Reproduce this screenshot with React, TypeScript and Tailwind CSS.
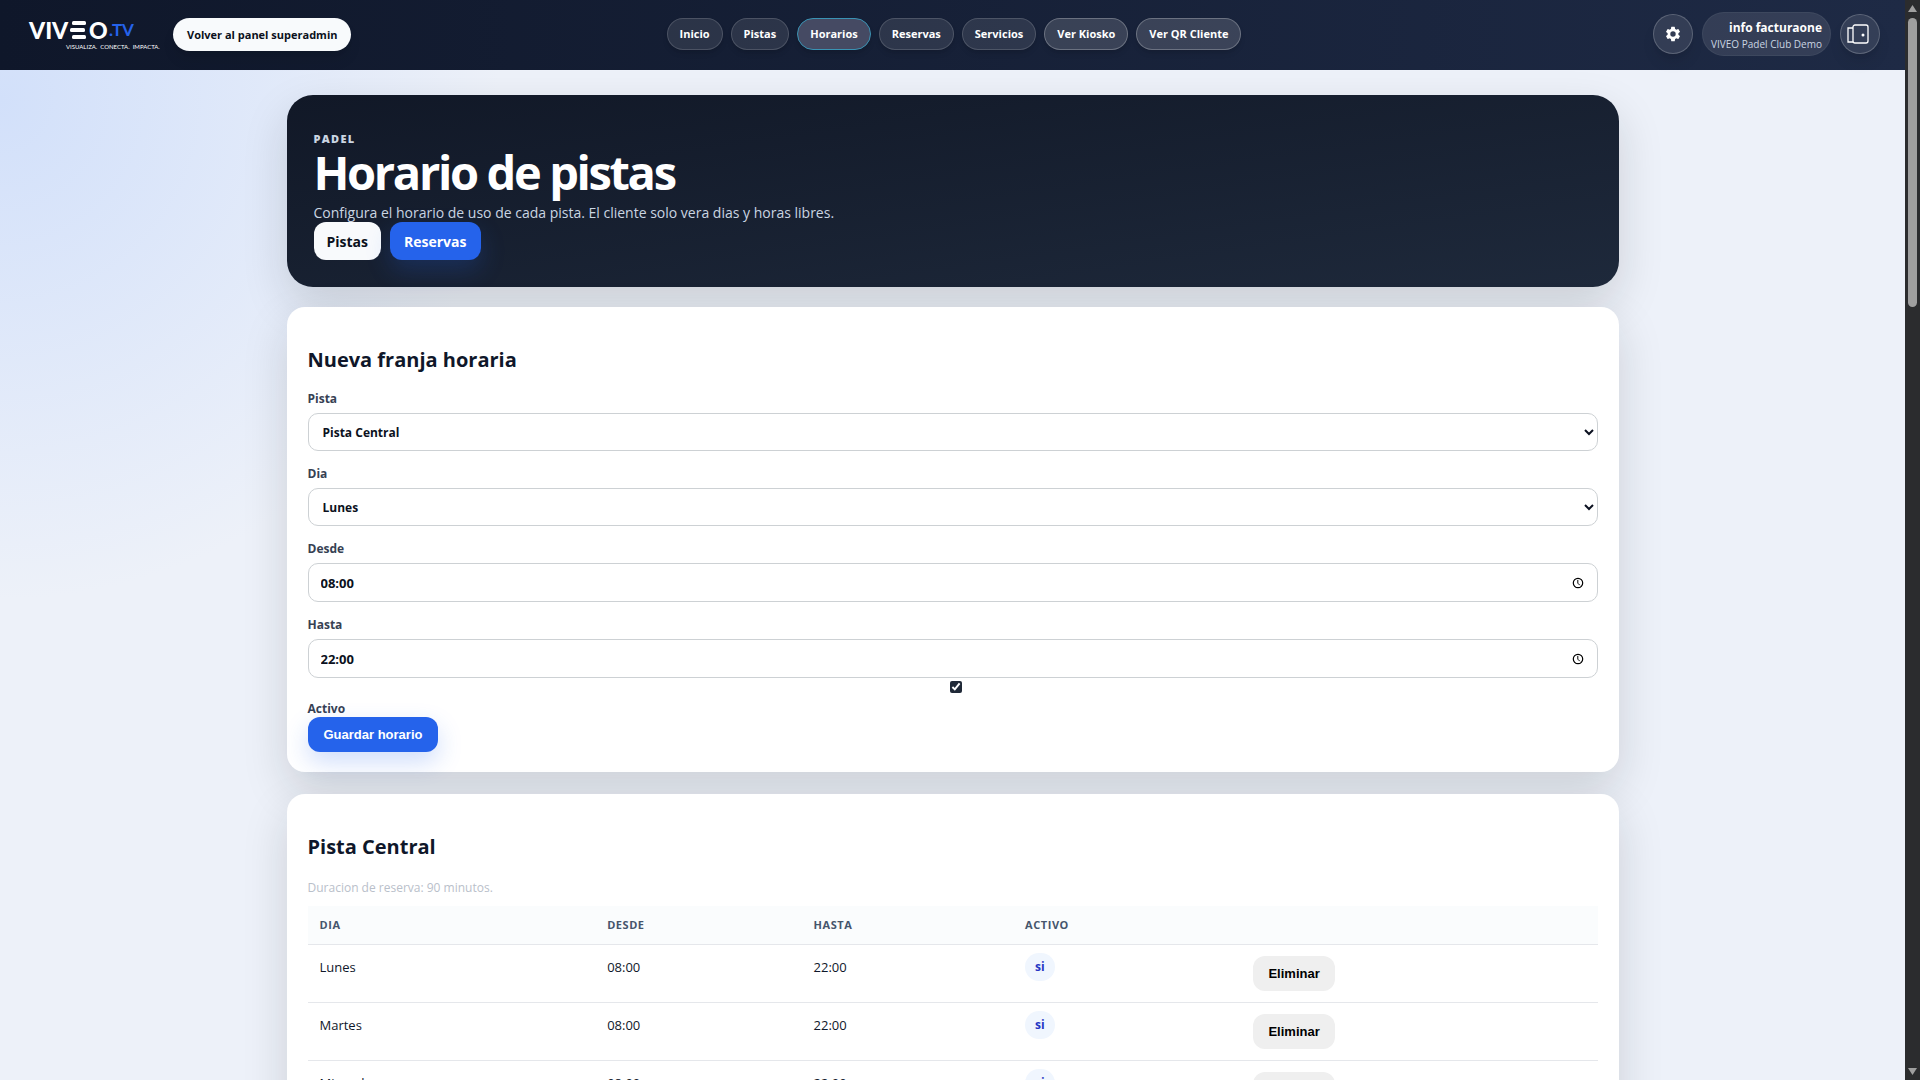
import { useState } from 'react';

const navItems = [
  { label: 'Inicio', kind: 'plain' },
  { label: 'Pistas', kind: 'plain' },
  { label: 'Horarios', kind: 'active' },
  { label: 'Reservas', kind: 'plain' },
  { label: 'Servicios', kind: 'plain' },
  { label: 'Ver Kiosko', kind: 'strong' },
  { label: 'Ver QR Cliente', kind: 'strong' },
];

const navStyles: Record<string, string> = {
  plain: 'border-white/15 bg-white/10',
  active: 'border-[#3a93b4] bg-[#454a63]',
  strong: 'border-white/25 bg-white/15',
};

const dias = ['Lunes', 'Martes', 'Miercoles', 'Jueves', 'Viernes', 'Sabado', 'Domingo'];

function Logo() {
  return (
    <a href="#inicio" aria-label="VIVEO.TV" className="block shrink-0">
      <svg width="132" height="34" viewBox="0 0 132 34" className="block overflow-visible font-['Lato']" fill="#fff">
        <text x="1" y="22" fontSize="23" fontWeight="900">VIV</text>
        <rect x="44" y="4" width="14" height="4" rx="1.500" />
        <rect x="42" y="11" width="15" height="4" rx="1.500" />
        <rect x="44" y="18" width="14" height="4" rx="1.500" />
        <text x="61" y="22" fontSize="23" fontWeight="900">O</text>
        <text x="81" y="19" fontSize="17" fontWeight="700" fill="#2563eb">.TV</text>
        <text x="38" y="32" fontSize="6" fontWeight="400" xmlSpace="preserve">VISUALIZA.  CONECTA.  IMPACTA.</text>
      </svg>
    </a>
  );
}

function Header() {
  return (
    <header className="grid h-[70px] shrink-0 grid-cols-[1fr_auto_1fr] items-center bg-linear-to-r from-[#0f172a] to-[#1e2a45] pr-[25px] pb-[2px] pl-7">
      <div className="flex items-center gap-[13px]">
        <Logo />
        <a href="#superadmin" className="rounded-full bg-slate-50 px-[14px] py-2 text-[11px] leading-[17px] font-bold text-[#0b1120] shadow-lg">
          Volver al panel superadmin
        </a>
      </div>
      <nav className="flex gap-2">
        {navItems.map((n) => (
          <a key={n.label} href="#" className={`rounded-full border px-3 py-[6px] text-[11px] leading-[18px] font-bold text-white shadow-md ${navStyles[n.kind]}`}>
            {n.label}
          </a>
        ))}
      </nav>
      <div className="flex items-center justify-end gap-[9px]">
        <button type="button" aria-label="Ajustes" className="flex size-10 items-center justify-center rounded-full border border-white/20 bg-white/10 text-white shadow-lg">
          <svg width="18" height="18" viewBox="0 0 24 24" fill="currentColor">
            <path d="M19.14 12.94c.04-.3.06-.61.06-.94 0-.32-.02-.64-.07-.94l2.03-1.58a.49.49 0 0 0 .12-.61l-1.92-3.32a.49.49 0 0 0-.59-.22l-2.39.96c-.5-.38-1.03-.7-1.62-.94l-.36-2.54a.48.48 0 0 0-.48-.41h-3.84a.48.48 0 0 0-.47.41l-.36 2.54c-.59.24-1.13.57-1.62.94l-2.39-.96a.48.48 0 0 0-.59.22L2.74 8.87a.48.48 0 0 0 .12.61l2.03 1.58c-.05.3-.09.63-.09.94s.02.64.07.94l-2.03 1.58a.49.49 0 0 0-.12.61l1.92 3.32c.12.22.37.29.59.22l2.39-.96c.5.38 1.03.7 1.62.94l.36 2.54c.05.24.24.41.48.41h3.84c.24 0 .44-.17.47-.41l.36-2.54c.59-.24 1.13-.56 1.62-.94l2.39.96c.22.08.47 0 .59-.22l1.92-3.32a.48.48 0 0 0-.12-.61l-2.01-1.58zM12 15.6a3.6 3.6 0 1 1 0-7.2 3.6 3.6 0 0 1 0 7.2z" />
          </svg>
        </button>
        <div className="rounded-full border border-white/5 bg-white/10 px-2 pt-[7px] pb-[3px] text-right">
          <div className="text-[12px] leading-4 font-bold text-white">info facturaone</div>
          <div className="text-[10px] leading-4 text-slate-300">VIVEO Padel Club Demo</div>
        </div>
        <button type="button" aria-label="Salir" className="flex size-10 items-center justify-center rounded-full border border-white/20 bg-white/10 pr-1 text-white shadow-lg">
          <svg width="22" height="20" viewBox="0 0 22 20" fill="none" stroke="currentColor" strokeWidth="1.300">
            <rect x="6" y="1" width="15" height="18" rx="2" />
            <path d="M6 4H1v14h5" />
            <circle cx="16" cy="11" r="1.500" fill="currentColor" stroke="none" />
          </svg>
        </button>
      </div>
    </header>
  );
}

const controlBox = 'block w-full rounded-[10px] border border-[#cdd1d4] bg-white font-bold text-[#0b1120]';

function SelectField({ id, label, options }: { id: string; label: string; options: string[] }) {
  return (
    <div className="mb-[14px]">
      <label htmlFor={id} className="mb-[5px] block text-[12px] leading-[18px] font-bold text-gray-700">{label}</label>
      <select id={id} className={`${controlBox} h-[38px] px-[10px] text-[12px]`}>
        {options.map((o) => (
          <option key={o}>{o}</option>
        ))}
      </select>
    </div>
  );
}

function TimeField({ id, label, initial, last }: { id: string; label: string; initial: string; last?: boolean }) {
  const [value, setValue] = useState(initial);
  return (
    <div className={last ? '' : 'mb-[14px]'}>
      <label htmlFor={id} className="mb-[5px] block text-[12px] leading-[18px] font-bold text-gray-700">{label}</label>
      <div className="relative">
        <input id={id} type="text" inputMode="numeric" value={value} onChange={(e) => setValue(e.target.value)} className={`${controlBox} h-[39px] px-3 text-[13px]`} />
        <button type="button" aria-label={`Elegir ${label}`} className="absolute inset-y-0 right-[14px] flex items-center text-black">
          <svg width="12" height="12" viewBox="0 0 12 12" fill="none" stroke="currentColor">
            <circle cx="6" cy="6" r="4.700" strokeWidth="1.200" />
            <path d="M5.800 3v3.200l2 2" strokeWidth="1" />
          </svg>
        </button>
      </div>
    </div>
  );
}

const cardStyle = 'rounded-[18px] bg-white shadow-[0_18px_45px_rgba(20,30,30,0.15)]';

export default function App() {
  return (
    <div className="flex h-screen overflow-hidden font-['Open_Sans',sans-serif] text-[#0f172a]">
      <div className="flex min-w-0 flex-1 flex-col overflow-hidden bg-[#edf1f9] bg-[radial-gradient(circle_at_0px_100px,#d2e0fa,transparent_500px)]">
        <Header />
        <main className="mx-auto w-full max-w-[1380px] px-6 pt-[25px]">
          <section className="rounded-[26px] bg-linear-to-br from-[#111827] to-[#1e293b] px-[27px] pt-9 pb-[27px] shadow-[0_18px_45px_rgba(20,30,30,0.15)]">
            <p className="text-[11px] leading-4 font-extrabold tracking-[0.12em] text-slate-300">PADEL</p>
            <h1 className="text-[47px] leading-[50px] font-bold tracking-tighter text-white">Horario de pistas</h1>
            <p className="mt-[7px] text-[14px] leading-[18px] text-slate-300">
              Configura el horario de uso de cada pista. El cliente solo vera dias y horas libres.
            </p>
            <div className="flex gap-[9px]">
              <a href="#pistas" className="rounded-xl bg-slate-50 px-[13px] pt-[9px] pb-[7px] text-[14px] leading-[22px] font-bold text-[#0b1120]">Pistas</a>
              <a href="#reservas" className="rounded-xl bg-[#2563eb] px-[14px] pt-[9px] pb-[7px] text-[14px] leading-[22px] font-bold text-white shadow-[0_10px_24px_rgba(37,99,235,0.22)]">Reservas</a>
            </div>
          </section>

          <section className={`${cardStyle} mt-5 px-[21px] pt-[38px] pb-5`}>
            <h2 className="mb-4 text-[20px] leading-[29px] font-bold">Nueva franja horaria</h2>
            <form onSubmit={(e) => e.preventDefault()}>
              <SelectField id="pista" label="Pista" options={['Pista Central']} />
              <SelectField id="dia" label="Dia" options={dias} />
              <TimeField id="desde" label="Desde" initial="08:00" />
              <TimeField id="hasta" label="Hasta" initial="22:00" last />
              <div className="flex justify-center pt-[3px] pl-[6px]">
                <input id="activo" type="checkbox" defaultChecked className="size-3 accent-[#1f2937]" />
              </div>
              <label htmlFor="activo" className="mt-2 block text-[12px] leading-4 font-bold text-gray-700">Activo</label>
              <button type="submit" className="rounded-xl bg-[#2563eb] px-4 py-2 font-['Liberation_Sans',sans-serif] text-[13px] leading-[19px] font-bold text-white shadow-[0_10px_24px_rgba(37,99,235,0.22)]">
                Guardar horario
              </button>
            </form>
          </section>

          <section className={`${cardStyle} mt-[22px] px-[21px] pt-[38px] pb-5`}>
            <h2 className="mb-4 text-[20px] leading-[29px] font-bold">Pista Central</h2>
            <p className="mb-[7px] text-[12px] leading-[22px] text-[#b9c0ca]">Duracion de reserva: 90 minutos.</p>
            <table className="w-full table-fixed text-left">
              <colgroup>
                <col className="w-[22.3%]" />
                <col className="w-[16%]" />
                <col className="w-[16.4%]" />
                <col className="w-[17.7%]" />
                <col />
              </colgroup>
              <thead>
                <tr className="h-[38px] border-b border-gray-200 bg-[#fafcfd] text-[11px] tracking-[0.05em] text-slate-600">
                  <th className="px-3 font-bold">DIA</th>
                  <th className="px-3 font-bold">DESDE</th>
                  <th className="px-3 font-bold">HASTA</th>
                  <th className="px-3 font-bold">ACTIVO</th>
                  <th className="px-3" aria-label="Acciones" />
                </tr>
              </thead>
              <tbody>
                {dias.map((d) => (
                  <tr key={d} className="border-b border-gray-200 align-top text-[13px] leading-[22px]">
                    <td className="px-3 py-[11px]">{d}</td>
                    <td className="px-3 py-[11px]">08:00</td>
                    <td className="px-3 py-[11px]">22:00</td>
                    <td className="px-3 py-2">
                      <span className="inline-block rounded-full bg-[#f0f6fe] px-[10px] py-[3px] text-[12px] font-bold text-[#2536c4]">si</span>
                    </td>
                    <td className="px-3 py-[11px]">
                      <button type="button" className="block rounded-xl bg-[#efefef] px-[15px] py-2 font-['Liberation_Sans',sans-serif] text-[13px] leading-[19px] font-bold text-black">
                        Eliminar
                      </button>
                    </td>
                  </tr>
                ))}
              </tbody>
            </table>
          </section>
        </main>
      </div>
      <div aria-hidden="true" className="flex w-[15px] shrink-0 flex-col items-center bg-[#2b2c2e] py-[5px]">
        <svg width="9" height="7" viewBox="0 0 9 7" fill="#9f9f9f"><path d="M4.500 0 9 7H0z" /></svg>
        <div className="mt-[6px] h-[27%] w-[9px] rounded-full bg-[#9f9f9f]" />
        <svg className="mt-auto" width="9" height="7" viewBox="0 0 9 7" fill="#9f9f9f"><path d="M4.500 7 9 0H0z" /></svg>
      </div>
    </div>
  );
}
